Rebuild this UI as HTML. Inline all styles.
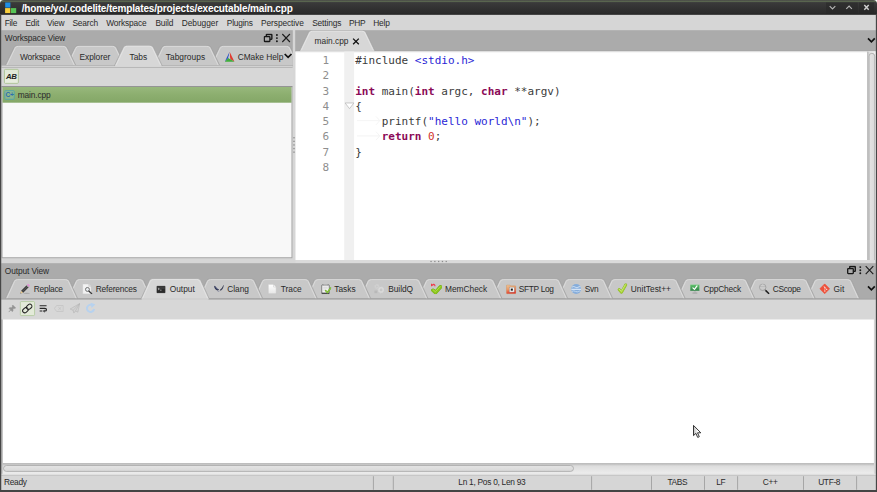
<!DOCTYPE html>
<html lang="en"><head><meta charset="utf-8"><title>main.cpp - CodeLite</title>
<style>
html,body{margin:0;padding:0;background:#fff}
body{width:877px;height:492px;overflow:hidden;position:relative;font-family:"Liberation Sans", sans-serif;font-size:8.35px;color:#2a2a2a}
#app{position:absolute;left:0;top:0;width:877px;height:492px;overflow:hidden}
#bg{position:absolute;left:0;top:0;display:block}
.t,.ln,.code{position:absolute;display:block;white-space:pre}
.t{line-height:12px;height:12px}
.it{font-style:italic}
.ln,.code{font-family:"DejaVu Sans Mono", "Liberation Mono", monospace;font-size:11px;height:15px;line-height:15px}
.ln{color:#8e8e8e;text-align:right;width:29px}
</style></head>
<body><div id="app">
<svg id="bg" width="877" height="492" viewBox="0 0 877 492">
<defs>
<linearGradient id="gTitle" x1="0" y1="0" x2="0" y2="1">
 <stop offset="0" stop-color="#4b4e48"/><stop offset="0.06" stop-color="#50554a"/><stop offset="0.095" stop-color="#5d6b51"/>
 <stop offset="0.14" stop-color="#414340"/><stop offset="0.2" stop-color="#3a3a3a"/><stop offset="0.55" stop-color="#323232"/>
 <stop offset="0.9" stop-color="#2b2b2b"/><stop offset="1" stop-color="#1e1e1e"/></linearGradient>
<linearGradient id="gSel" x1="0" y1="0" x2="0" y2="1"><stop offset="0" stop-color="#98b87c"/><stop offset="0.5" stop-color="#8cae6f"/><stop offset="1" stop-color="#84a767"/></linearGradient>
<linearGradient id="gBtn" x1="0" y1="0" x2="0" y2="1"><stop offset="0" stop-color="#e0e8d6"/><stop offset="1" stop-color="#e8eee0"/></linearGradient>
<linearGradient id="gVTrack" x1="0" y1="0" x2="1" y2="0"><stop offset="0" stop-color="#cdcdcd"/><stop offset="0.35" stop-color="#e4e4e4"/><stop offset="1" stop-color="#f0f0f0"/></linearGradient>
<linearGradient id="gVThumb" x1="0" y1="0" x2="1" y2="0"><stop offset="0" stop-color="#e4e4e4"/><stop offset="1" stop-color="#dadada"/></linearGradient>
<linearGradient id="gHTrack" x1="0" y1="0" x2="0" y2="1"><stop offset="0" stop-color="#c2c2c2"/><stop offset="0.3" stop-color="#dedede"/><stop offset="1" stop-color="#ededed"/></linearGradient>
<linearGradient id="gHThumb" x1="0" y1="0" x2="0" y2="1"><stop offset="0" stop-color="#e4e4e4"/><stop offset="1" stop-color="#d8d8d8"/></linearGradient>
</defs>
<rect x="0" y="0" width="877" height="492" fill="#d6d6d6" />
<rect x="0" y="0" width="877" height="14.8" fill="url(#gTitle)" />
<rect x="5.2" y="2.5" width="5.2" height="5.1" fill="#1e8fe6" />
<rect x="5.1" y="8.1" width="5.2" height="5" fill="#f9cf3d" />
<rect x="11" y="8.1" width="5.2" height="5" fill="#55c456" />
<svg x="826" y="2" width="48" height="12" viewBox="0 0 48 12" ><rect x="0" y="0.6" width="31.8" height="10.6" fill="#262626" opacity="0.5"/><rect x="33" y="0.6" width="15" height="10.6" fill="#262626" opacity="0.5"/><path d="M3.7 4.1 L6.5 6.9 L9.3 4.1" fill="none" stroke="#b4b4b4" stroke-width="1.15"/><path d="M20.3 6.9 L23.1 4.1 L25.9 6.9" fill="none" stroke="#b4b4b4" stroke-width="1.15"/><path d="M38.3 3.1 L42.7 7.7 M42.7 3.1 L38.3 7.7" fill="none" stroke="#d0d0d0" stroke-width="1.45"/></svg>
<rect x="1.25" y="30.2" width="291.55" height="36.6" fill="#ababab" />
<svg x="1.25" y="45.3" width="291.55" height="22.8" viewBox="1.25 0 291.55 22.80" ><path d="M210.58 20.20 L219.25 2.13 Q220.20 0.15 222.40 0.15 L287.30 0.15 Q289.50 0.15 290.45 2.13 L299.12 20.20 Z" fill="#c8c8c8" stroke="#9e9e9e" stroke-width="0.7"/><path d="M212.00 20.20 L220.27 2.98 Q221.22 1.00 223.42 1.00 L286.28 1.00 Q288.48 1.00 289.43 2.98 L297.70 20.20" fill="none" stroke="#e2e2e2" stroke-width="0.7"/><path d="M153.08 20.20 L161.75 2.13 Q162.70 0.15 164.90 0.15 L207.90 0.15 Q210.10 0.15 211.05 2.13 L219.72 20.20 Z" fill="#c8c8c8" stroke="#9e9e9e" stroke-width="0.7"/><path d="M154.50 20.20 L162.77 2.98 Q163.72 1.00 165.92 1.00 L206.88 1.00 Q209.08 1.00 210.03 2.98 L218.30 20.20" fill="none" stroke="#e2e2e2" stroke-width="0.7"/><path d="M66.18 20.20 L74.85 2.13 Q75.80 0.15 78.00 0.15 L113.40 0.15 Q115.60 0.15 116.55 2.13 L125.22 20.20 Z" fill="#c8c8c8" stroke="#9e9e9e" stroke-width="0.7"/><path d="M67.60 20.20 L75.87 2.98 Q76.82 1.00 79.02 1.00 L112.38 1.00 Q114.58 1.00 115.53 2.98 L123.80 20.20" fill="none" stroke="#e2e2e2" stroke-width="0.7"/><path d="M5.38 20.20 L14.05 2.13 Q15.00 0.15 17.20 0.15 L64.00 0.15 Q66.20 0.15 67.15 2.13 L75.82 20.20 Z" fill="#c8c8c8" stroke="#9e9e9e" stroke-width="0.7"/><path d="M6.80 20.20 L15.07 2.98 Q16.02 1.00 18.22 1.00 L62.98 1.00 Q65.18 1.00 66.13 2.98 L74.40 20.20" fill="none" stroke="#e2e2e2" stroke-width="0.7"/><rect x="1.25" y="20.20" width="291.55" height="1.5" fill="#d7d7d7"/><rect x="1.25" y="19.85" width="291.55" height="0.7" fill="#b4b4b4"/><rect x="1.25" y="21.60" width="291.55" height="0.9" fill="#a9a9a9"/><path d="M114.50 20.20 L123.25 1.98 Q124.20 0.00 126.40 0.00 L150.20 0.00 Q152.40 0.00 153.35 1.98 L162.10 20.20 Z" fill="#d7d7d7" stroke="#a2a2a2" stroke-width="0.7"/><path d="M115.93 20.20 L124.27 2.83 Q125.22 0.85 127.42 0.85 L149.18 0.85 Q151.38 0.85 152.33 2.83 L160.67 20.20" fill="none" stroke="#e8e8e8" stroke-width="0.7"/><rect x="115.10" y="19.60" width="46.39" height="1.95" fill="#d7d7d7"/></svg>
<svg x="224.2" y="51" width="11" height="11.6" viewBox="0 0 11 11" preserveAspectRatio="none"><path d="M5.4 0.6 L0.6 10.2 L4.2 6.6 Z" fill="#2a52c8"/><path d="M5.4 0.6 L10.2 10.2 L6.0 7.6 Z" fill="#e03a2f"/><path d="M0.6 10.2 L4.2 6.6 L10.2 10.2 Z" fill="#3fae3a"/><path d="M5.4 0.6 L4.2 6.6 L6.0 7.6 Z" fill="#c9c9c9"/></svg>
<svg x="283.3" y="51.8" width="10" height="8" viewBox="0 0 10 8" ><path d="M1.4 2.2 L4.8 5.6 L8.2 2.2" fill="none" stroke="#111" stroke-width="1.7"/></svg>
<svg x="263.4" y="33.3" width="30" height="10" viewBox="0 0 30 10" ><rect x="2.9" y="1.1" width="5.6" height="4.9" fill="#3a3a3a" stroke="#161616" stroke-width="1.3" rx="0.5"/><rect x="3.7" y="2.0" width="4.0" height="3.2" fill="#ababab"/><rect x="0.9" y="3.3" width="5.6" height="4.9" fill="#ababab" stroke="#161616" stroke-width="1.3" rx="0.5"/><circle cx="13.5" cy="1.7" r="0.95" fill="#161616"/><circle cx="13.5" cy="4.8" r="0.95" fill="#161616"/><circle cx="13.5" cy="7.9" r="0.95" fill="#161616"/><path d="M18.9 0.7 L26.5 8.7 M26.5 0.7 L18.9 8.7" stroke="#1c1c1c" stroke-width="1.1" fill="none"/></svg>
<rect x="1.25" y="67.8" width="291.55" height="18.5" fill="#d7d7d7" />
<rect x="4.45" y="69.35" width="13.9" height="14.0" rx="1" fill="url(#gBtn)" stroke="#a4c08a" stroke-width="0.8"/>
<rect x="2.05" y="86.65" width="289.9" height="171.1" fill="#f8f8f8" stroke="#a2a2a2" stroke-width="0.9"/>
<rect x="1.6" y="86.2" width="290.8" height="0.9" fill="#8e8e8e" />
<rect x="2.5" y="87" width="289" height="15.7" fill="url(#gSel)" />
<rect x="4.8" y="90.7" width="9.4" height="8.6" rx="0.8" fill="#96c8be" fill-opacity="0.35" stroke="#4aa3b4" stroke-width="0.8"/>
<rect x="293.3" y="137.1" width="1.4" height="1.3" fill="#8d8d8d" />
<rect x="293.3" y="140.7" width="1.4" height="1.3" fill="#8d8d8d" />
<rect x="293.3" y="144.3" width="1.4" height="1.3" fill="#8d8d8d" />
<rect x="293.3" y="147.9" width="1.4" height="1.3" fill="#8d8d8d" />
<rect x="293.3" y="151.5" width="1.4" height="1.3" fill="#8d8d8d" />
<rect x="295.2" y="30.2" width="580.65" height="21" fill="#ababab" />
<svg x="295.2" y="30.3" width="580.65" height="23" viewBox="295.2 0 580.65 23.00" ><rect x="295.2" y="20.40" width="580.6500000000001" height="0.9" fill="#9f9f9f"/><path d="M299.71 20.40 L308.55 1.98 Q309.50 0.00 311.70 0.00 L362.80 0.00 Q365.00 0.00 365.95 1.98 L374.79 20.40 Z" fill="#d7d7d7" stroke="#a2a2a2" stroke-width="0.7"/><path d="M301.14 20.40 L309.57 2.83 Q310.52 0.85 312.72 0.85 L361.78 0.85 Q363.98 0.85 364.93 2.83 L373.36 20.40" fill="none" stroke="#e8e8e8" stroke-width="0.7"/><rect x="300.31" y="19.80" width="73.88" height="1.0" fill="#d7d7d7"/><rect x="300.31" y="20.70" width="73.88" height="0.6" fill="#c4c4c4"/></svg>
<svg x="351.6" y="37.3" width="9" height="9" viewBox="0 0 9 9" ><path d="M1.5 1.3 L7.2 7 M7.2 1.3 L1.5 7" stroke="#111" stroke-width="1.3" fill="none"/></svg>
<svg x="866.6" y="36.2" width="10" height="8" viewBox="0 0 10 8" ><path d="M1.4 2.2 L4.8 5.6 L8.2 2.2" fill="none" stroke="#111" stroke-width="1.7"/></svg>
<rect x="295.5" y="51.5" width="580.35" height="208.5" fill="#fff" />
<rect x="295.5" y="51.5" width="580.35" height="0.8" fill="#e4e4e4" />
<rect x="344.2" y="51.6" width="9.9" height="208.4" fill="#f0f0f0" />
<rect x="867.4" y="51.6" width="8.45" height="208.4" fill="url(#gVTrack)" />
<rect x="867.3" y="51.6" width="1" height="208.4" fill="#b4b4b4" />
<svg x="867" y="51.6" width="9" height="208.4" viewBox="867 51.6 9 208.4"><rect x="869.1" y="53.3" width="5.6" height="212" rx="2.8" fill="url(#gVThumb)" stroke="#a8a8a8" stroke-width="0.8"/></svg>
<rect x="295.5" y="260" width="580.35" height="3.3" fill="#dadada" />
<rect x="430.4" y="260.9" width="1.3" height="1.2" fill="#8d8d8d" />
<rect x="434.2" y="260.9" width="1.3" height="1.2" fill="#8d8d8d" />
<rect x="438" y="260.9" width="1.3" height="1.2" fill="#8d8d8d" />
<rect x="441.8" y="260.9" width="1.3" height="1.2" fill="#8d8d8d" />
<rect x="445.6" y="260.9" width="1.3" height="1.2" fill="#8d8d8d" />
<svg x="344.5" y="102.08" width="10" height="8" viewBox="0 0 10 8" ><path d="M0.6 0.9 H9.4 L5 6.6 Z" fill="#fff" stroke="#b4b4b4" stroke-width="0.7"/></svg>
<svg x="356" y="115.64" width="26" height="10" viewBox="0 0 26 10" ><path d="M1 5 H23.6 M20 0.8 L23.8 5 L20 9.2" fill="none" stroke="#efefef" stroke-width="0.7"/></svg>
<svg x="356" y="130.9" width="26" height="10" viewBox="0 0 26 10" ><path d="M1 5 H23.6 M20 0.8 L23.8 5 L20 9.2" fill="none" stroke="#efefef" stroke-width="0.7"/></svg>
<rect x="1.25" y="263.2" width="874.6" height="36.4" fill="#ababab" />
<svg x="1.25" y="278.6" width="874.6" height="22.8" viewBox="1.25 0 874.6 22.80" ><path d="M805.78 20.20 L813.99 2.15 Q814.90 0.15 817.10 0.15 L848.40 0.15 Q850.60 0.15 851.51 2.15 L859.72 20.20 Z" fill="#c8c8c8" stroke="#9e9e9e" stroke-width="0.7"/><path d="M807.18 20.20 L815.01 3.00 Q815.92 1.00 818.12 1.00 L847.38 1.00 Q849.58 1.00 850.49 3.00 L858.32 20.20" fill="none" stroke="#e2e2e2" stroke-width="0.7"/><path d="M745.48 20.20 L753.69 2.15 Q754.60 0.15 756.80 0.15 L804.00 0.15 Q806.20 0.15 807.11 2.15 L815.32 20.20 Z" fill="#c8c8c8" stroke="#9e9e9e" stroke-width="0.7"/><path d="M746.88 20.20 L754.71 3.00 Q755.62 1.00 757.82 1.00 L802.98 1.00 Q805.18 1.00 806.09 3.00 L813.92 20.20" fill="none" stroke="#e2e2e2" stroke-width="0.7"/><path d="M676.38 20.20 L684.59 2.15 Q685.50 0.15 687.70 0.15 L743.60 0.15 Q745.80 0.15 746.71 2.15 L754.92 20.20 Z" fill="#c8c8c8" stroke="#9e9e9e" stroke-width="0.7"/><path d="M677.78 20.20 L685.61 3.00 Q686.52 1.00 688.72 1.00 L742.58 1.00 Q744.78 1.00 745.69 3.00 L753.52 20.20" fill="none" stroke="#e2e2e2" stroke-width="0.7"/><path d="M602.68 20.20 L610.89 2.15 Q611.80 0.15 614.00 0.15 L674.00 0.15 Q676.20 0.15 677.11 2.15 L685.32 20.20 Z" fill="#c8c8c8" stroke="#9e9e9e" stroke-width="0.7"/><path d="M604.08 20.20 L611.91 3.00 Q612.82 1.00 615.02 1.00 L672.98 1.00 Q675.18 1.00 676.09 3.00 L683.92 20.20" fill="none" stroke="#e2e2e2" stroke-width="0.7"/><path d="M556.88 20.20 L565.09 2.15 Q566.00 0.15 568.20 0.15 L601.50 0.15 Q603.70 0.15 604.61 2.15 L612.82 20.20 Z" fill="#c8c8c8" stroke="#9e9e9e" stroke-width="0.7"/><path d="M558.28 20.20 L566.11 3.00 Q567.02 1.00 569.22 1.00 L600.48 1.00 Q602.68 1.00 603.59 3.00 L611.42 20.20" fill="none" stroke="#e2e2e2" stroke-width="0.7"/><path d="M490.98 20.20 L499.19 2.15 Q500.10 0.15 502.30 0.15 L556.50 0.15 Q558.70 0.15 559.61 2.15 L567.82 20.20 Z" fill="#c8c8c8" stroke="#9e9e9e" stroke-width="0.7"/><path d="M492.38 20.20 L500.21 3.00 Q501.12 1.00 503.32 1.00 L555.48 1.00 Q557.68 1.00 558.59 3.00 L566.42 20.20" fill="none" stroke="#e2e2e2" stroke-width="0.7"/><path d="M417.18 20.20 L425.39 2.15 Q426.30 0.15 428.50 0.15 L490.80 0.15 Q493.00 0.15 493.91 2.15 L502.12 20.20 Z" fill="#c8c8c8" stroke="#9e9e9e" stroke-width="0.7"/><path d="M418.58 20.20 L426.41 3.00 Q427.32 1.00 429.52 1.00 L489.78 1.00 Q491.98 1.00 492.89 3.00 L500.72 20.20" fill="none" stroke="#e2e2e2" stroke-width="0.7"/><path d="M358.98 20.20 L367.19 2.15 Q368.10 0.15 370.30 0.15 L416.80 0.15 Q419.00 0.15 419.91 2.15 L428.12 20.20 Z" fill="#c8c8c8" stroke="#9e9e9e" stroke-width="0.7"/><path d="M360.38 20.20 L368.21 3.00 Q369.12 1.00 371.32 1.00 L415.78 1.00 Q417.98 1.00 418.89 3.00 L426.72 20.20" fill="none" stroke="#e2e2e2" stroke-width="0.7"/><path d="M305.78 20.20 L313.99 2.15 Q314.90 0.15 317.10 0.15 L359.50 0.15 Q361.70 0.15 362.61 2.15 L370.82 20.20 Z" fill="#c8c8c8" stroke="#9e9e9e" stroke-width="0.7"/><path d="M307.18 20.20 L315.01 3.00 Q315.92 1.00 318.12 1.00 L358.48 1.00 Q360.68 1.00 361.59 3.00 L369.42 20.20" fill="none" stroke="#e2e2e2" stroke-width="0.7"/><path d="M253.38 20.20 L261.59 2.15 Q262.50 0.15 264.70 0.15 L306.10 0.15 Q308.30 0.15 309.21 2.15 L317.42 20.20 Z" fill="#c8c8c8" stroke="#9e9e9e" stroke-width="0.7"/><path d="M254.78 20.20 L262.61 3.00 Q263.52 1.00 265.72 1.00 L305.08 1.00 Q307.28 1.00 308.19 3.00 L316.02 20.20" fill="none" stroke="#e2e2e2" stroke-width="0.7"/><path d="M198.28 20.20 L206.49 2.15 Q207.40 0.15 209.60 0.15 L251.50 0.15 Q253.70 0.15 254.61 2.15 L262.82 20.20 Z" fill="#c8c8c8" stroke="#9e9e9e" stroke-width="0.7"/><path d="M199.68 20.20 L207.51 3.00 Q208.42 1.00 210.62 1.00 L250.48 1.00 Q252.68 1.00 253.59 3.00 L261.42 20.20" fill="none" stroke="#e2e2e2" stroke-width="0.7"/><path d="M67.18 20.20 L75.39 2.15 Q76.30 0.15 78.50 0.15 L140.70 0.15 Q142.90 0.15 143.81 2.15 L152.02 20.20 Z" fill="#c8c8c8" stroke="#9e9e9e" stroke-width="0.7"/><path d="M68.58 20.20 L76.41 3.00 Q77.32 1.00 79.52 1.00 L139.68 1.00 Q141.88 1.00 142.79 3.00 L150.62 20.20" fill="none" stroke="#e2e2e2" stroke-width="0.7"/><path d="M5.28 20.20 L13.49 2.15 Q14.40 0.15 16.60 0.15 L66.40 0.15 Q68.60 0.15 69.51 2.15 L77.72 20.20 Z" fill="#c8c8c8" stroke="#9e9e9e" stroke-width="0.7"/><path d="M6.68 20.20 L14.51 3.00 Q15.42 1.00 17.62 1.00 L65.38 1.00 Q67.58 1.00 68.49 3.00 L76.32 20.20" fill="none" stroke="#e2e2e2" stroke-width="0.7"/><rect x="1.25" y="19.70" width="874.6" height="1.5" fill="#a6a6a6"/><path d="M141.01 20.20 L149.29 2.00 Q150.20 0.00 152.40 0.00 L197.80 0.00 Q200.00 0.00 200.91 2.00 L209.19 20.20 Z" fill="#d7d7d7" stroke="#a2a2a2" stroke-width="0.7"/><path d="M142.42 20.20 L150.31 2.85 Q151.22 0.85 153.42 0.85 L196.78 0.85 Q198.98 0.85 199.89 2.85 L207.78 20.20" fill="none" stroke="#e8e8e8" stroke-width="0.7"/><rect x="141.61" y="19.60" width="66.98" height="1.6" fill="#d7d7d7"/></svg>
<svg x="846.8" y="265.4" width="30" height="10" viewBox="0 0 30 10" ><rect x="2.9" y="1.1" width="5.6" height="4.9" fill="#3a3a3a" stroke="#161616" stroke-width="1.3" rx="0.5"/><rect x="3.7" y="2.0" width="4.0" height="3.2" fill="#ababab"/><rect x="0.9" y="3.3" width="5.6" height="4.9" fill="#ababab" stroke="#161616" stroke-width="1.3" rx="0.5"/><circle cx="13.5" cy="1.7" r="0.95" fill="#161616"/><circle cx="13.5" cy="4.8" r="0.95" fill="#161616"/><circle cx="13.5" cy="7.9" r="0.95" fill="#161616"/><path d="M18.9 0.7 L26.5 8.7 M26.5 0.7 L18.9 8.7" stroke="#1c1c1c" stroke-width="1.1" fill="none"/></svg>
<svg x="866.6" y="284.2" width="10" height="8" viewBox="0 0 10 8" ><path d="M1.4 2.2 L4.8 5.6 L8.2 2.2" fill="none" stroke="#111" stroke-width="1.7"/></svg>
<svg x="19.70" y="283.90" width="10.3" height="10.3" viewBox="0 0 16 16"><ellipse cx="11" cy="14.6" rx="5" ry="0.9" fill="#8a8a8a" opacity="0.5"/><path d="M1 15 L2.2 10.6 L5.4 13.8 Z" fill="#e9c98e"/><path d="M1 15 L1.5 13.2 L2.8 14.5 Z" fill="#333"/><path d="M2.2 10.6 L11.2 1.6 L14.4 4.8 L5.4 13.8 Z" fill="#3a3a3a"/><path d="M3.4 11.8 L12.4 2.8 L13.2 3.6 L4.2 12.6 Z" fill="#5a5a5a"/><path d="M11.2 1.6 L12.4 0.5 Q13.2 -0.1 14 0.7 L15.3 2 Q16 2.8 15.4 3.6 L14.4 4.8 Z" fill="#e68ad8"/><path d="M10.4 2.4 L11.2 1.6 L14.4 4.8 L13.6 5.6 Z" fill="#c9c9c9"/></svg><svg x="82.20" y="283.80" width="10.5" height="10.5" viewBox="0 0 16 16"><path d="M0.6 0.3 H10 L13.6 3.9 V15.4 H0.6 Z" fill="#f2f2f2" stroke="#c4c4c4" stroke-width="0.7"/><path d="M10 0.3 V3.9 H13.6" fill="#dedede" stroke="#bdbdbd" stroke-width="0.6"/><circle cx="8" cy="8.6" r="3.0" fill="#e9edf0" stroke="#555" stroke-width="1.2"/><path d="M10.4 11.2 L14.6 15" stroke="#3a3a3a" stroke-width="2" stroke-linecap="round"/></svg><svg x="156.30" y="284.90" width="9.4" height="9.4" viewBox="0 0 16 16"><rect x="0.6" y="2" width="14.8" height="11.6" rx="1.2" fill="#2b2b2b" stroke="#555" stroke-width="0.6"/><rect x="1.4" y="2.8" width="13.2" height="4" fill="#444" opacity="0.7"/><path d="M3 5.4 L5.2 7 L3 8.6" fill="none" stroke="#eee" stroke-width="1.1"/><path d="M6.2 9 H9" stroke="#ddd" stroke-width="1"/></svg><svg x="213.80" y="283.90" width="10.3" height="10.3" viewBox="0 0 16 16"><path d="M0.6 3 Q2.6 3.4 4 5.4 Q5.6 7.8 8 8.4 Q7.6 10.4 5.4 10.2 Q2.4 9.4 1.2 6.4 Q0.7 4.8 0.6 3 Z" fill="#2e3350"/><path d="M15.4 1.4 Q15.6 5 13.6 8 Q12 10.4 9.4 10.8 Q9 9 10.6 8.4 Q12.8 7 13.8 4.2 Q14.4 2.6 15.4 1.4 Z" fill="#3b3f55"/><path d="M5.4 10.2 Q7.4 12 9.4 10.8 Q8.6 12.6 7.2 12.6 Q5.8 12.2 5.4 10.2Z" fill="#8a8fa3"/><path d="M2 4.6 Q4 6 5.6 8.6" stroke="#6f7fb8" stroke-width="0.7" fill="none"/></svg><svg x="267.20" y="283.90" width="10.3" height="10.3" viewBox="0 0 16 16"><defs><linearGradient id="pg" x1="0" y1="0" x2="0" y2="1"><stop offset="0" stop-color="#ffffff"/><stop offset="1" stop-color="#e6e6e6"/></linearGradient></defs><path d="M1.6 0.6 H9.8 L14 4.8 V15.4 H1.6 Z" fill="url(#pg)" stroke="#c0c0c0" stroke-width="0.8"/><path d="M9.8 0.6 V4.8 H14 Z" fill="#fdfdfd" stroke="#c0c0c0" stroke-width="0.7"/></svg><svg x="321.00" y="283.90" width="10.3" height="10.3" viewBox="0 0 16 16"><rect x="1.2" y="1.6" width="11.6" height="13.6" rx="0.8" fill="#f6f6f6" stroke="#4a4a4a" stroke-width="1"/><rect x="1.2" y="13.6" width="11.6" height="1.8" fill="#3c3c3c"/><rect x="3.4" y="0.6" width="7.2" height="2.2" rx="0.6" fill="#dcdcdc" stroke="#7a7a7a" stroke-width="0.6"/><path d="M3.4 5.4 H10.4 M3.4 7.6 H10.4 M3.4 9.8 H8" stroke="#c4c4c4" stroke-width="0.9"/><path d="M7.4 10.6 L10 13.4 L15 6.4" fill="none" stroke="#6fb02c" stroke-width="2.6" stroke-linecap="round" stroke-linejoin="round"/><path d="M7.4 10.6 L10 13.4 L15 6.4" fill="none" stroke="#9ad04a" stroke-width="1.1" stroke-linecap="round" stroke-linejoin="round"/></svg><svg x="374.00" y="283.90" width="10.3" height="10.3" viewBox="0 0 16 16"><circle cx="4.4" cy="4" r="2.5" fill="none" stroke="#d2d2d2" stroke-width="1.7"/><circle cx="11" cy="9.4" r="3.3" fill="none" stroke="#dadada" stroke-width="2.2"/><circle cx="11" cy="9.4" r="4.9" fill="none" stroke="#dadada" stroke-width="1" stroke-dasharray="1.6 2.25"/><circle cx="4.4" cy="4" r="3.7" fill="none" stroke="#d2d2d2" stroke-width="0.9" stroke-dasharray="1.3 1.6"/><rect x="0.6" y="10.4" width="4.6" height="4" fill="#b9b9b9"/></svg><svg x="431.00" y="283.30" width="11" height="11" viewBox="0 0 16 16"><g transform="translate(0.4 2.2) scale(1.0 0.9)"><path d="M2.6 8.8 L6.2 12.4 L13.4 3.4" fill="none" stroke="#6ea516" stroke-width="5.5" stroke-linecap="round" stroke-linejoin="round"/><path d="M2.6 8.8 L6.2 12.4 L13.4 3.4" fill="none" stroke="#8cc61e" stroke-width="4.6" stroke-linecap="round" stroke-linejoin="round"/><path d="M2.8 8.2 L6.0 11.2 L12.8 3.2" fill="none" stroke="#b4e04e" stroke-width="1.3" stroke-linecap="round" stroke-linejoin="round"/></g><path d="M0.6 4.2 V1.2 L2.3 2.8 L4 1.2 L5.6 2.8 V4.2" fill="none" stroke="#f03a4a" stroke-width="1.6" stroke-linejoin="round"/></svg><svg x="506.00" y="284.20" width="10.3" height="10.3" viewBox="0 0 16 16"><defs><linearGradient id="sf" x1="0" y1="0" x2="0.3" y2="1"><stop offset="0" stop-color="#ecc79c"/><stop offset="0.5" stop-color="#e99a66"/><stop offset="1" stop-color="#e2382d"/></linearGradient></defs><path d="M0.6 2.4 Q0.6 1.2 1.8 1.2 H6 L7.4 2.6 H14.2 Q15.4 2.6 15.4 3.8 V13.6 Q15.4 14.8 14.2 14.8 H1.8 Q0.6 14.8 0.6 13.6 Z" fill="url(#sf)" stroke="#c98b5a" stroke-width="0.6"/><rect x="5.2" y="4.6" width="7.6" height="7.6" fill="#f3f3f3" stroke="#8a8a8a" stroke-width="0.6"/><rect x="7.4" y="6.8" width="3.2" height="3.2" fill="#1a1a1a"/></svg><svg x="570.80" y="283.60" width="10.8" height="10.8" viewBox="0 0 16 16"><circle cx="8" cy="8" r="7.4" fill="#86addb"/><path d="M1.4 5.6 Q4 3.4 6.6 5.2 Q9 6.8 11.4 5 Q13.2 3.8 14.6 5.2" fill="none" stroke="#c4d9f0" stroke-width="1.5"/><path d="M0.8 8.5 H15.2" stroke="#d4e3f5" stroke-width="1.6"/><path d="M1.6 11.6 Q4.4 10 7 11.6 Q9.6 13 12 11.4 Q13.4 10.6 14.4 11.2" fill="none" stroke="#c4d9f0" stroke-width="1.4"/></svg><svg x="617.00" y="283.30" width="10.6" height="10.6" viewBox="0 0 16 16"><path d="M3.2 9.4 L6.8 13.6 L13.2 2.2" fill="none" stroke="#8ab526" stroke-width="4.2" stroke-linecap="round" stroke-linejoin="round"/><path d="M3.2 9.4 L6.8 13.6 L13.2 2.2" fill="none" stroke="#a6d136" stroke-width="3.2" stroke-linecap="round" stroke-linejoin="round"/><path d="M3.4 8.8 L6.6 12.4 L12.6 2.2" fill="none" stroke="#cdeb80" stroke-width="1.2" stroke-linecap="round" stroke-linejoin="round"/></svg><svg x="689.70" y="283.70" width="10.3" height="10.3" viewBox="0 0 16 16"><defs><linearGradient id="cp" x1="0" y1="0" x2="0" y2="1"><stop offset="0" stop-color="#5fc56a"/><stop offset="1" stop-color="#2e7f45"/></linearGradient></defs><rect x="0.6" y="1.4" width="14.8" height="10" rx="0.8" fill="url(#cp)" stroke="#c9d2cb" stroke-width="0.7"/><path d="M5 6.4 L7.4 8.8 L11.4 3.4" fill="none" stroke="#fff" stroke-width="1.9" stroke-linecap="round" stroke-linejoin="round"/><path d="M6.6 11.6 H9.6 L10 13.6 H6.2 Z" fill="#b5b5b5"/><path d="M4.4 14.6 H11.8" stroke="#8e8e8e" stroke-width="1"/></svg><svg x="758.90" y="283.50" width="10.8" height="10.8" viewBox="0 0 16 16"><defs><linearGradient id="sc" x1="0" y1="0" x2="0" y2="1"><stop offset="0" stop-color="#e6e6e6"/><stop offset="0.45" stop-color="#b4b4b4"/><stop offset="0.55" stop-color="#cfcfcf"/><stop offset="1" stop-color="#c2c2c2"/></linearGradient></defs><circle cx="5.6" cy="5.6" r="4.8" fill="url(#sc)" stroke="#9a9a9a" stroke-width="1.1"/><path d="M8.8 9.2 L11 11.4" stroke="#6a6a6a" stroke-width="1.5"/><path d="M10.6 11 L14.6 14.8" stroke="#1f1f1f" stroke-width="2.3" stroke-linecap="round"/></svg><svg x="819.40" y="283.50" width="10.6" height="10.6" viewBox="0 0 16 16"><path d="M8 0.5 L15.5 8 L8 15.5 L0.5 8 Z" fill="#ee513b" stroke="#ee513b" stroke-width="0.8" stroke-linejoin="round"/><path d="M6.2 3.6 L8.2 5.6 V11.6 M8.2 6.2 L11 9" stroke="#f6c9c0" stroke-width="1" fill="none"/><circle cx="8.2" cy="5.8" r="1" fill="#fbe3de"/><circle cx="8.2" cy="11.4" r="1" fill="#fbe3de"/><circle cx="10.9" cy="8.8" r="1" fill="#fbe3de"/></svg>
<rect x="1.25" y="299.7" width="874.6" height="19.8" fill="#d7d7d7" />
<svg x="8.30" y="304.60" width="7.8" height="7.8" viewBox="0 0 16 16"><path d="M9.2 0.8 L15.2 6.8 L13.4 8 L11.6 7.6 L9.6 9.8 L9.8 13 L8 14.4 L1.6 8 L3 6.2 L6.2 6.4 L8.4 4.4 L8 2.6 Z" fill="#959595" stroke="#959595" stroke-width="1" stroke-linejoin="round"/><path d="M5 11 L0.9 15.1" stroke="#959595" stroke-width="1.9" stroke-linecap="round"/></svg><rect x="20.35" y="301.55" width="14.2" height="14.0" rx="1" fill="#e3ead9" stroke="#a9c592" stroke-width="0.7"/><svg x="21.90" y="303.10" width="10.8" height="10.8" viewBox="0 0 16 16"><g transform="rotate(-42 8 8)" fill="none" stroke="#262626" stroke-width="1.55"><rect x="-0.2" y="4.9" width="8.8" height="6.2" rx="3.1"/><rect x="7.4" y="4.9" width="8.8" height="6.2" rx="3.1"/></g></svg><svg x="38.90" y="304.60" width="8.4" height="8.4" viewBox="0 0 16 18"><g fill="none" stroke="#262626" stroke-width="2.5"><path d="M0.6 2.4 H15.4"/><path d="M0.6 8.2 H12 Q15.2 8.2 15.2 11 Q15.2 13.8 12 13.8 H10.4"/><path d="M0.6 13.8 H6.4"/></g><path d="M11.2 10.4 L7.8 13.8 L11.2 17.2 Z" fill="#262626"/></svg><svg x="54.00" y="304.90" width="9.8" height="9.8" viewBox="0 0 20 20"><path d="M5.4 1.2 H18.8 V13.4 H5.4 L0.8 7.3 Z" fill="none" stroke="#c0c0c0" stroke-width="1.3" stroke-linejoin="round"/><path d="M8.8 4.4 L15 10.2 M15 4.4 L8.8 10.2" stroke="#c0c0c0" stroke-width="1.4"/></svg><svg x="69.60" y="303.00" width="10.6" height="10.6" viewBox="0 0 16 16"><path d="M15.2 0.8 L0.8 9.2 L5.4 11 L6.4 15.2 L8.8 12.2 L12.4 13.8 Z M5.4 11 L15.2 0.8 M8.8 12.2 L15.2 0.8" fill="#d0d0d0" fill-opacity="0.5" stroke="#b4b4b4" stroke-width="0.9" stroke-linejoin="round"/></svg><svg x="85.30" y="302.80" width="10.6" height="10.6" viewBox="0 0 16 16"><path d="M13.2 9.4 A5.4 5.4 0 1 1 9.4 3.2" fill="none" stroke="#b7d2ef" stroke-width="3.0"/><path d="M8 -0.4 L15.2 2.6 L9.4 7.8 Z" fill="#b7d2ef"/></svg>
<rect x="2.7" y="319.5" width="871.2" height="144.2" fill="#fff" />
<rect x="1.25" y="319.5" width="1.45" height="156" fill="#b8b8b8" />
<rect x="2.7" y="463.4" width="871.2" height="10.4" fill="url(#gHTrack)" />
<rect x="2.7" y="463.2" width="871.2" height="1.1" fill="#b8b8b8" />
<rect x="3.5" y="465.5" width="570.0" height="5.9" rx="2.95" fill="url(#gHThumb)" stroke="#a8a8a8" stroke-width="0.8"/>
<rect x="1.25" y="473.8" width="874.6" height="1" fill="#ededed" />
<rect x="1.25" y="474.8" width="874.6" height="0.8" fill="#bdbdbd" />
<rect x="372.9" y="476.2" width="1" height="13.6" fill="#a6a6a6" />
<rect x="392.8" y="476.2" width="1" height="13.6" fill="#a6a6a6" />
<rect x="591.1" y="476.2" width="1" height="13.6" fill="#a6a6a6" />
<rect x="651" y="476.2" width="1" height="13.6" fill="#a6a6a6" />
<rect x="704" y="476.2" width="1" height="13.6" fill="#a6a6a6" />
<rect x="737.1" y="476.2" width="1" height="13.6" fill="#a6a6a6" />
<rect x="803" y="476.2" width="1" height="13.6" fill="#a6a6a6" />
<rect x="856.1" y="476.2" width="1" height="13.6" fill="#a6a6a6" />
<rect x="0" y="14.8" width="1.25" height="477.2" fill="#464646" />
<rect x="875.85" y="14.8" width="1.15" height="477.2" fill="#464646" />
<rect x="0" y="490" width="877" height="2" fill="#444" />
<path d="M0 0 H3.8 A3.8 3.8 0 0 0 0 3.8 Z" fill="#fff"/>
<path d="M877 0 H873.2 A3.8 3.8 0 0 1 877 3.8 Z" fill="#fff"/>
<svg x="692.5" y="424.4" width="10" height="15" viewBox="0 0 10 15" ><defs><linearGradient id="gCur" x1="0" y1="0" x2="1" y2="0"><stop offset="0" stop-color="#bdbdbd"/><stop offset="0.6" stop-color="#fff"/></linearGradient></defs><path d="M1 1 V11.2 L3.4 9 L5.2 13 L6.8 12.3 L5 8.4 H8.3 Z" fill="url(#gCur)" stroke="#222" stroke-width="0.9" stroke-linejoin="round"/></svg>
</svg>
<span class="t" id="t0" style="left:21.73px;top:2.60px;font-size:10.0px;color:#fff;font-weight:bold;letter-spacing:-0.150px;">/home/yo/.codelite/templates/projects/executable/main.cpp</span>
<span class="t" id="t1" style="left:4.80px;top:16.60px;letter-spacing:-0.320px;">File</span>
<span class="t" id="t2" style="left:25.41px;top:16.60px;letter-spacing:-0.173px;">Edit</span>
<span class="t" id="t3" style="left:47.12px;top:16.60px;letter-spacing:-0.159px;">View</span>
<span class="t" id="t4" style="left:72.43px;top:16.60px;letter-spacing:-0.140px;">Search</span>
<span class="t" id="t5" style="left:106.23px;top:16.60px;letter-spacing:-0.144px;">Workspace</span>
<span class="t" id="t6" style="left:155.42px;top:16.60px;letter-spacing:-0.152px;">Build</span>
<span class="t" id="t7" style="left:181.78px;top:16.60px;letter-spacing:-0.032px;">Debugger</span>
<span class="t" id="t8" style="left:226.80px;top:16.60px;letter-spacing:-0.196px;">Plugins</span>
<span class="t" id="t9" style="left:261.06px;top:16.60px;letter-spacing:-0.081px;">Perspective</span>
<span class="t" id="t10" style="left:312.14px;top:16.60px;letter-spacing:-0.120px;">Settings</span>
<span class="t" id="t11" style="left:349.09px;top:16.60px;letter-spacing:-0.320px;">PHP</span>
<span class="t" id="t12" style="left:373.20px;top:16.60px;letter-spacing:-0.193px;">Help</span>
<span class="t" id="t13" style="left:4.84px;top:32.00px;letter-spacing:-0.110px;">Workspace View</span>
<span class="t" id="t14" style="left:20.02px;top:50.70px;letter-spacing:-0.155px;">Workspace</span>
<span class="t" id="t15" style="left:79.48px;top:50.70px;letter-spacing:-0.035px;">Explorer</span>
<span class="t" id="t16" style="left:129.51px;top:50.70px;letter-spacing:0.019px;">Tabs</span>
<span class="t" id="t17" style="left:165.72px;top:50.70px;letter-spacing:0.048px;">Tabgroups</span>
<span class="t" id="t18" style="left:237.68px;top:50.70px;letter-spacing:-0.032px;">CMake Help</span>
<span class="t it" id="t19" style="left:5.88px;top:71.00px;font-size:7.8px;color:#222;font-weight:bold;letter-spacing:-0.233px;">AB</span>
<span class="t" id="t20" style="left:5.44px;top:88.80px;font-size:6.6px;color:#2a6fb0;font-weight:bold;letter-spacing:-0.312px;">C+</span>
<span class="t" id="t21" style="left:17.65px;top:88.90px;color:#2b2b2b;letter-spacing:-0.107px;">main.cpp</span>
<span class="t" id="t22" style="left:314.60px;top:35.20px;letter-spacing:0.005px;">main.cpp</span>
<span class="t" id="t23" style="left:4.75px;top:264.60px;letter-spacing:-0.101px;">Output View</span>
<span class="t" id="t24" style="left:33.78px;top:283.00px;letter-spacing:-0.232px;">Replace</span>
<span class="t" id="t25" style="left:95.72px;top:283.00px;letter-spacing:-0.157px;">References</span>
<span class="t" id="t26" style="left:169.70px;top:283.00px;letter-spacing:0.006px;">Output</span>
<span class="t" id="t27" style="left:227.28px;top:283.00px;letter-spacing:-0.043px;">Clang</span>
<span class="t" id="t28" style="left:280.79px;top:283.00px;letter-spacing:-0.026px;">Trace</span>
<span class="t" id="t29" style="left:334.21px;top:283.00px;letter-spacing:0.014px;">Tasks</span>
<span class="t" id="t30" style="left:388.35px;top:283.00px;letter-spacing:-0.091px;">BuildQ</span>
<span class="t" id="t31" style="left:444.99px;top:283.00px;letter-spacing:-0.013px;">MemCheck</span>
<span class="t" id="t32" style="left:518.76px;top:283.00px;letter-spacing:-0.320px;">SFTP Log</span>
<span class="t" id="t33" style="left:584.68px;top:283.00px;letter-spacing:-0.230px;">Svn</span>
<span class="t" id="t34" style="left:630.82px;top:283.00px;letter-spacing:0.031px;">UnitTest++</span>
<span class="t" id="t35" style="left:703.41px;top:283.00px;letter-spacing:-0.171px;">CppCheck</span>
<span class="t" id="t36" style="left:772.67px;top:283.00px;letter-spacing:-0.265px;">CScope</span>
<span class="t" id="t37" style="left:833.47px;top:283.00px;letter-spacing:0.143px;">Git</span>
<span class="t" id="t38" style="left:4.05px;top:476.30px;letter-spacing:-0.305px;">Ready</span>
<span class="t" id="t39" style="left:458.36px;top:476.30px;letter-spacing:-0.278px;">Ln 1, Pos 0, Len 93</span>
<span class="t" id="t40" style="left:667.39px;top:476.30px;letter-spacing:-0.320px;">TABS</span>
<span class="t" id="t41" style="left:716.29px;top:476.30px;letter-spacing:-0.320px;">LF</span>
<span class="t" id="t42" style="left:762.68px;top:476.30px;letter-spacing:-0.320px;">C++</span>
<span class="t" id="t43" style="left:818.17px;top:476.30px;letter-spacing:-0.320px;">UTF-8</span>
<div class="ln" style="left:300px;top:53.00px">1</div>
<div class="code" style="left:355.2px;top:53.00px"><span style="color:#3b3b3b">#include </span><span style="color:#2a1fd6">&lt;stdio.h&gt;</span></div>
<div class="ln" style="left:300px;top:68.26px">2</div>
<div class="ln" style="left:300px;top:83.52px">3</div>
<div class="code" style="left:355.2px;top:83.52px"><span style="color:#8b0a57"><b>int</b></span><span style="color:#3b3b3b"> main(</span><span style="color:#8b0a57"><b>int</b></span><span style="color:#3b3b3b"> argc, </span><span style="color:#8b0a57"><b>char</b></span><span style="color:#3b3b3b"> **argv)</span></div>
<div class="ln" style="left:300px;top:98.78px">4</div>
<div class="code" style="left:355.2px;top:98.78px"><span style="color:#3b3b3b">{</span></div>
<div class="ln" style="left:300px;top:114.04px">5</div>
<div class="code" style="left:355.2px;top:114.04px"><span style="color:#3b3b3b">    printf(</span><span style="color:#2a1fd6">&quot;hello world\n&quot;</span><span style="color:#3b3b3b">);</span></div>
<div class="ln" style="left:300px;top:129.30px">6</div>
<div class="code" style="left:355.2px;top:129.30px"><span style="color:#3b3b3b">    </span><span style="color:#8b0a57"><b>return</b></span><span style="color:#3b3b3b"> </span><span style="color:#d0342c">0</span><span style="color:#3b3b3b">;</span></div>
<div class="ln" style="left:300px;top:144.56px">7</div>
<div class="code" style="left:355.2px;top:144.56px"><span style="color:#3b3b3b">}</span></div>
<div class="ln" style="left:300px;top:159.82px">8</div>
</div></body></html>
